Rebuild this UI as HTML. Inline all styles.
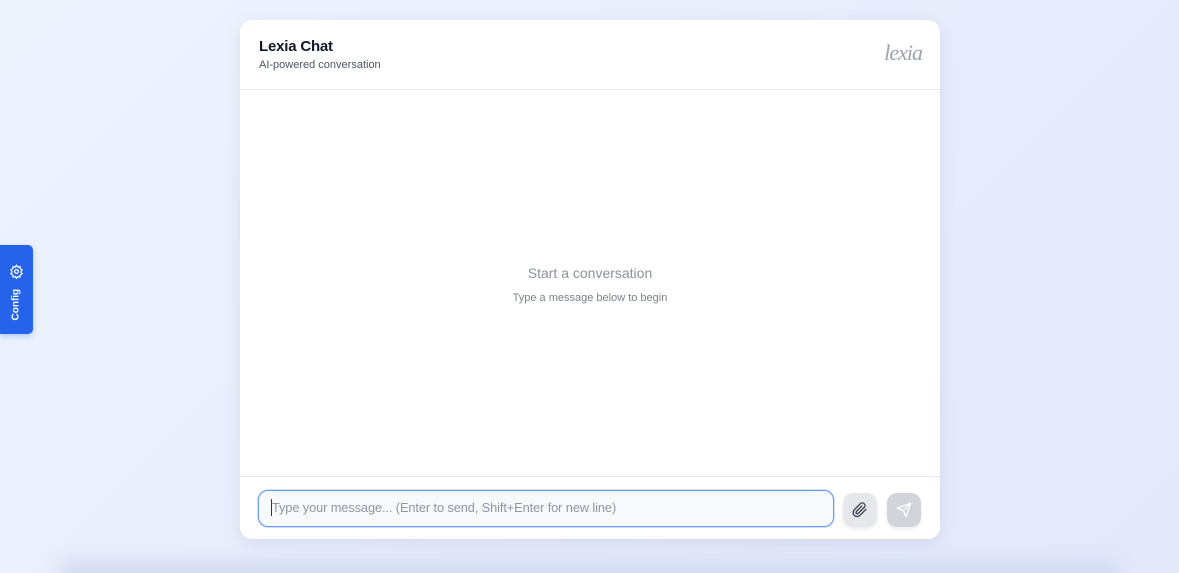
<!DOCTYPE html>
<html><head><style>
html,body{margin:0;padding:0;width:1179px;height:573px;overflow:hidden;font-family:"Liberation Sans",sans-serif;}
body{background:linear-gradient(135deg,#eef4fe 0%,#e6ecfb 60%,#e3e8fb 100%);position:relative;}
.shade{position:absolute;left:60px;right:60px;top:560px;height:30px;background:#d6dcf0;filter:blur(8px);}
.card{position:absolute;left:240px;top:20px;width:700px;height:519px;background:#fff;border-radius:12px;box-shadow:0 4px 16px rgba(80,90,140,.12);overflow:hidden;}
.hdr{height:69px;border-bottom:1px solid #e5e7eb;position:relative;}
.t{position:absolute;left:19px;top:18px;font-size:15px;font-weight:bold;color:#111827;letter-spacing:-0.2px}
.s{position:absolute;left:19px;top:39px;font-size:11px;color:#4b5563;}
.logo{position:absolute;right:18px;top:20px;font-family:"Liberation Serif",serif;font-style:italic;font-size:22px;color:#9ca3af;letter-spacing:-1px;}
.mid{position:absolute;top:245px;width:100%;text-align:center;}
.m1{font-size:14px;color:#8b919c;}
.m2{font-size:11px;color:#7b818c;margin-top:11px}
.ftr{position:absolute;top:456px;left:0;right:0;border-top:1px solid #e5e7eb;height:63px;}
.inp{position:absolute;left:18px;top:13px;width:574px;height:35px;border:1.5px solid #6b9cf0;border-radius:10px;background:#f7f9fb;box-shadow:0 0 0 1px #cfe0fb;}
.inp span{position:absolute;left:13px;top:9px;font-size:12.8px;color:#8f96a3;letter-spacing:-0.1px}
.inp i{position:absolute;left:12px;top:8px;width:1px;height:17px;background:#333;}
.b{position:absolute;top:16px;width:34px;height:34px;border-radius:10px;background:#e5e7eb;box-shadow:0 2px 4px rgba(0,0,0,.08);}
.cfg{position:absolute;left:0;top:245px;width:33px;height:89px;background:#2563eb;border-radius:0 5px 5px 0;box-shadow:0 2px 6px rgba(37,99,235,.3);}
.cfg span{position:absolute;left:7px;top:55px;transform:rotate(-90deg);transform-origin:center;color:#fff;font-size:10px;font-weight:bold;width:30px;margin-left:-6px;text-align:center;}
</style></head><body>
<div class="shade"></div>
<div class="cfg">
<svg style="position:absolute;left:9px;top:19px" width="15" height="15" viewBox="0 0 24 24" fill="none" stroke="#fff" stroke-width="2"><circle cx="12" cy="12" r="3"/><path d="M12 2l2 3 3.5-1 .5 3.5 3 2-2 3 2 3-3 2-.5 3.5-3.5-1-2 3-2-3-3.5 1-.5-3.5-3-2 2-3-2-3 3-2 .5-3.5 3.5 1z"/></svg>
<span>Config</span></div>
<div class="card">
<div class="hdr"><div class="t">Lexia Chat</div><div class="s">AI-powered conversation</div><div class="logo">lexia</div></div>
<div class="mid"><div class="m1">Start a conversation</div><div class="m2">Type a message below to begin</div></div>
<div class="ftr">
<div class="inp"><i></i><span>Type your message... (Enter to send, Shift+Enter for new line)</span></div>
<div class="b" style="left:603px"><svg style="position:absolute;left:9px;top:9px" width="16" height="16" viewBox="0 0 24 24" fill="none" stroke="#374151" stroke-width="2" stroke-linecap="round"><path d="M21 11l-9 9a6 6 0 01-8.5-8.5l9-9a4 4 0 015.7 5.7l-9 9a2 2 0 01-2.8-2.8l8.3-8.3"/></svg></div>
<div class="b" style="left:647px;background:#d1d5db"><svg style="position:absolute;left:9px;top:9px" width="16" height="16" viewBox="0 0 24 24" fill="none" stroke="#fff" stroke-width="2" stroke-linejoin="round"><path d="M22 2L11 13M22 2l-7 20-4-9-9-4z"/></svg></div>
</div>
</div>
</body></html>
